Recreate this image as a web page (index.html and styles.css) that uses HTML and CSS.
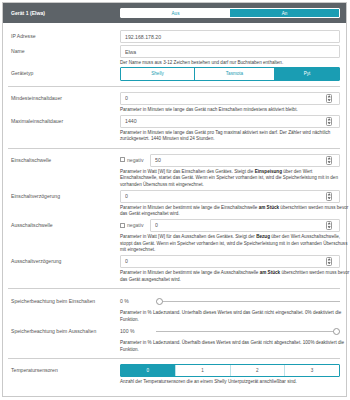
FILE: index.html
```html
<!DOCTYPE html>
<html lang="de">
<head>
  <meta charset="utf-8">
  <title>Gerät 1 (Elwa)</title>
  <link rel="stylesheet" href="styles.css">
</head>
<body>
  <div class="card">
    <div class="card-header">
      <span class="title">Gerät 1 (Elwa)</span>
      <div class="seg seg-head">
        <button class="seg-btn">Aus</button>
        <button class="seg-btn active">An</button>
      </div>
    </div>

    <div class="card-body">
      <div class="row">
        <label class="lbl">IP Adresse</label>
        <div class="ctl"><input class="field" type="text" value="192.168.178.20"></div>
      </div>
      <div class="row row-tight">
        <label class="lbl">Name</label>
        <div class="ctl"><input class="field" type="text" value="Elwa"></div>
      </div>
      <p class="help">Der Name muss aus 3-12 Zeichen bestehen und darf nur Buchstaben enthalten.</p>
      <div class="row row-flush">
        <label class="lbl">Gerätetyp</label>
        <div class="ctl">
          <div class="seg seg-type">
            <button class="seg-btn w-shelly">Shelly</button>
            <button class="seg-btn w-tasmota">Tasmota</button>
            <button class="seg-btn active">Pyt</button>
          </div>
        </div>
      </div>

      <hr>

      <div class="row">
        <label class="lbl">Mindesteinschaltdauer</label>
        <div class="ctl">
          <div class="num"><input type="text" value="0"><span class="spin"></span></div>
        </div>
      </div>
      <p class="help">Parameter in Minuten wie lange das Gerät nach Einschalten mindestens aktiviert bleibt.</p>
      <div class="row">
        <label class="lbl">Maximaleinschaltdauer</label>
        <div class="ctl">
          <div class="num"><input type="text" value="1440"><span class="spin"></span></div>
        </div>
      </div>
      <p class="help">Parameter in Minuten wie lange das Gerät pro Tag maximal aktiviert sein darf. Der Zähler wird nächtlich<br>zurückgesetzt. 1440 Minuten sind 24 Stunden.</p>

      <hr>

      <div class="row">
        <label class="lbl">Einschaltschwelle</label>
        <div class="ctl ctl-check">
          <label class="check"><input type="checkbox"> negativ</label>
          <div class="num"><input type="text" value="50"><span class="spin"></span></div>
        </div>
      </div>
      <p class="help">Parameter in Watt [W] für das Einschalten des Gerätes. Steigt die <b>Einspeisung</b> über den Wert<br>Einschaltschwelle, startet das Gerät. Wenn ein Speicher vorhanden ist, wird die Speicherleistung mit in den<br>vorhanden Überschuss mit eingerechnet.</p>
      <div class="row">
        <label class="lbl">Einschaltverzögerung</label>
        <div class="ctl">
          <div class="num"><input type="text" value="0"><span class="spin"></span></div>
        </div>
      </div>
      <p class="help">Parameter in Minuten der bestimmt wie lange die Einschaltschwelle <b>am Stück</b> überschritten werden muss bevor<br>das Gerät eingeschaltet wird.</p>
      <div class="row">
        <label class="lbl">Ausschaltschwelle</label>
        <div class="ctl ctl-check">
          <label class="check"><input type="checkbox"> negativ</label>
          <div class="num"><input type="text" value="0"><span class="spin"></span></div>
        </div>
      </div>
      <p class="help">Parameter in Watt [W] für das Ausschalten des Gerätes. Steigt der <b>Bezug</b> über den Wert Ausschaltschwelle,<br>stoppt das Gerät. Wenn ein Speicher vorhanden ist, wird die Speicherleistung mit in den vorhanden Überschuss<br>mit eingerechnet.</p>
      <div class="row">
        <label class="lbl">Ausschaltverzögerung</label>
        <div class="ctl">
          <div class="num"><input type="text" value="0"><span class="spin"></span></div>
        </div>
      </div>
      <p class="help">Parameter in Minuten der bestimmt wie lange die Ausschaltschwelle <b>am Stück</b> überschritten werden muss bevor<br>das Gerät ausgeschaltet wird.</p>

      <hr>

      <div class="row row-range">
        <label class="lbl">Speicherbeachtung beim Einschalten</label>
        <div class="ctl ctl-range">
          <span class="range-val">0 %</span>
          <input class="range" type="range" min="0" max="100" value="0">
        </div>
      </div>
      <p class="help">Parameter in % Ladezustand. Unterhalb dieses Wertes wird das Gerät nicht eingeschaltet. 0% deaktiviert die<br>Funktion.</p>
      <div class="row row-range">
        <label class="lbl">Speicherbeachtung beim Ausschalten</label>
        <div class="ctl ctl-range">
          <span class="range-val">100 %</span>
          <input class="range" type="range" min="0" max="100" value="100">
        </div>
      </div>
      <p class="help">Parameter in % Ladezustand. Überhalb dieses Wertes wird das Gerät nicht abgeschaltet. 100% deaktiviert die<br>Funktion.</p>

      <hr>

      <div class="row">
        <label class="lbl">Temperatursensoren</label>
        <div class="ctl">
          <div class="seg seg-temp">
            <button class="seg-btn active">0</button>
            <button class="seg-btn">1</button>
            <button class="seg-btn">2</button>
            <button class="seg-btn">3</button>
          </div>
        </div>
      </div>
      <p class="help">Anzahl der Temperatursensoren die an einem Shelly Unterputzgerät anschließbar sind.</p>
    </div>
  </div>
</body>
</html>
```

FILE: styles.css
```css
:root {
  --teal: #1a9db3;
  --header: #5d6368;
  --label: #555;
  --border: #d6d6d6;
  --line: #cfcfcf;
}

body {
  margin: 0;
  font-family: 'Liberation Sans', Arial, sans-serif;
  font-size: 5.2px;
  line-height: 1.2;
  color: var(--label);
  background: #fff;
}

.card {
  margin: 2px 2px 0 2px;
  width: 343px;
  border: 1px solid #c9c9c9;
}

.card-header {
  height: 20px;
  background: var(--header);
  display: flex;
  align-items: center;
  padding: 0 6px 0 8px;
}

.title {
  width: 109px;
  color: #fff;
  font-size: 5.1px;
  font-weight: bold;
}

.card-body {
  padding: 7px 6px 10px 5px;
}

/* rows */
.row {
  display: flex;
  align-items: center;
  min-height: 13px;
  margin-top: 1.5px;
}

.row:first-child {
  margin-top: 0;
}

.row-tight {
  margin-top: 2px;
}

.row-flush {
  margin-top: 0;
}

.row-range {
  min-height: 14px;
  margin-top: 1px;
}

hr + .row-range {
  margin-top: 2px;
}

.lbl {
  width: 112px;
  flex: none;
  padding-left: 3px;
  box-sizing: border-box;
  font-size: 5.1px;
  color: var(--label);
}

.ctl {
  flex: 1;
  min-width: 0;
}

.help {
  margin: 2px 0 0 112px;
  font-size: 4.6px;
  line-height: 6.5px;
  white-space: nowrap;
  color: #444;
}

.help b {
  color: #222;
}

hr {
  border: 0;
  border-top: 1px solid var(--line);
  margin: 5px 0 5px;
}

/* inputs */
.field, .num {
  display: block;
  box-sizing: border-box;
  width: 100%;
  height: 13px;
  border: 1px solid var(--border);
  border-radius: 1px;
  font-family: inherit;
  font-size: 5.2px;
  color: var(--label);
  padding: 0 4px;
  margin: 0;
}

.num {
  display: flex;
  align-items: center;
}

.num input {
  flex: 1;
  min-width: 0;
  border: 0;
  padding: 0;
  outline: none;
  font: inherit;
  color: inherit;
  background: transparent;
}

.spin {
  width: 4px;
  height: 7px;
  border: 0.6px solid #999;
  border-radius: 1.5px;
  position: relative;
  margin-right: 3px;
}

.spin::before, .spin::after {
  content: "";
  position: absolute;
  left: 1px;
  width: 1.4px;
  height: 1.4px;
  border-left: 0.6px solid #666;
  border-top: 0.6px solid #666;
}

.spin::before {
  top: 1.4px;
  transform: rotate(45deg);
}

.spin::after {
  bottom: 1.4px;
  transform: rotate(225deg);
}

.ctl-check {
  display: flex;
  align-items: center;
}

.check {
  width: 30px;
  flex: none;
  display: flex;
  align-items: center;
  gap: 2px;
  font-size: 5.1px;
  color: #666;
}

.check input {
  appearance: none;
  margin: 0;
  width: 5px;
  height: 5px;
  border: 0.6px solid #999;
  border-radius: 0.5px;
}

/* segmented buttons */
.seg {
  display: flex;
  border: 1px solid var(--teal);
  border-radius: 1px;
  overflow: hidden;
  box-sizing: border-box;
}

.seg-btn {
  flex: 1;
  border: 0;
  border-left: 0.6px solid var(--teal);
  background: #fff;
  color: var(--teal);
  font-family: inherit;
  font-size: 4.6px;
  padding: 0;
}

.seg-btn:first-child {
  border-left: 0;
}

.seg-btn.active {
  background: var(--teal);
  color: #fff;
}

.seg-head {
  width: 220px;
  height: 10px;
  border-color: #fff;
}

.seg-head .seg-btn {
  border-left: 0;
}

.seg-type {
  height: 14px;
}

.w-shelly {
  flex: 0 0 73px;
}

.w-tasmota {
  flex: 0 0 80px;
}

.seg-temp {
  height: 13px;
}

.seg-temp .seg-btn {
  color: #555;
  border-left-color: #bde2e8;
}

.seg-temp .seg-btn.active {
  color: #fff;
}

/* sliders */
.ctl-range {
  display: flex;
  align-items: center;
}

.range-val {
  width: 36px;
  flex: none;
  font-size: 5.1px;
  color: var(--label);
}

.range {
  -webkit-appearance: none;
  appearance: none;
  flex: 1;
  margin: 0;
  height: 8px;
  background: transparent;
}

.range::-webkit-slider-runnable-track {
  height: 1px;
  background: #bdbdbd;
}

.range::-webkit-slider-thumb {
  -webkit-appearance: none;
  width: 7px;
  height: 7px;
  margin-top: -3px;
  border-radius: 50%;
  background: #fff;
  border: 0.6px solid #999;
  box-sizing: border-box;
}
```
